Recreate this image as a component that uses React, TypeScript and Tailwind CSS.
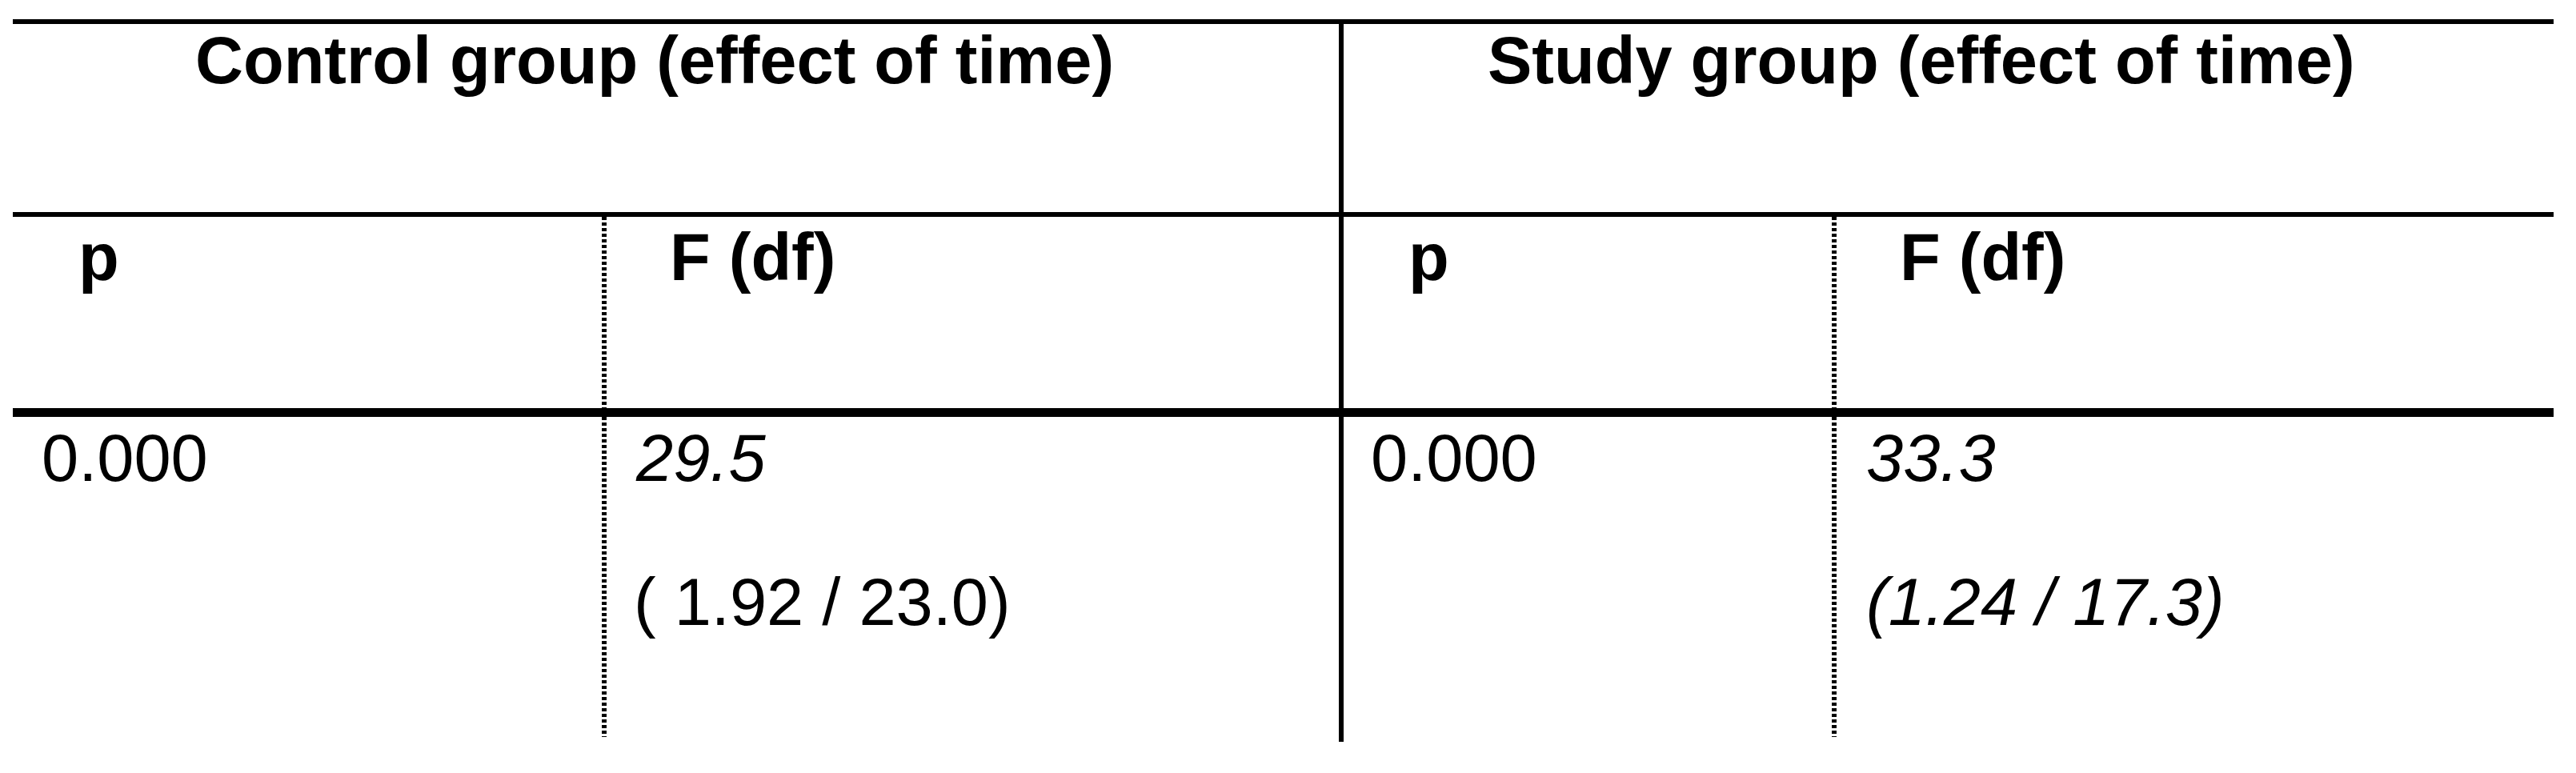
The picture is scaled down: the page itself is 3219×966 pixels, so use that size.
import React from "react";

const Dashed = ({ className = "" }: { className?: string }) => (
  <div
    className={`w-[6px] shrink-0 bg-[repeating-linear-gradient(to_bottom,#000_0px,#000_4px,transparent_4px,transparent_7px)] ${className}`}
  />
);

const Solid = () => <div className="w-[6px] shrink-0 bg-black" />;

export default function App() {
  return (
    <div
      className="w-[3219px] h-[966px] bg-white pt-[24px] pl-[16px] text-black text-[83px] leading-none"
      style={{ fontFamily: '"Liberation Sans", Arial, sans-serif' }}
    >
      <div className="w-[3175px] border-t-[6px] border-black">
        {/* Row 1: group headings */}
        <div className="flex h-[235px]">
          <div className="w-[1657px] shrink-0 pl-[228px] pt-[4px] font-bold whitespace-nowrap">
            Control group (effect of time)
          </div>
          <Solid />
          <div className="flex-1 pl-[180px] pt-[4px] font-bold whitespace-nowrap">
            Study group (effect of time)
          </div>
        </div>
        <div className="h-[6px] bg-black" />

        {/* Row 2: sub headings */}
        <div className="flex h-[239px]">
          <div className="w-[736px] shrink-0 pl-[82px] pt-[9px] font-bold">p</div>
          <Dashed />
          <div className="w-[915px] shrink-0 pl-[79px] pt-[9px] font-bold whitespace-nowrap">
            F (df)
          </div>
          <Solid />
          <div className="w-[610px] shrink-0 pl-[81px] pt-[9px] font-bold">p</div>
          <Dashed />
          <div className="flex-1 pl-[79px] pt-[9px] font-bold whitespace-nowrap">F (df)</div>
        </div>
        <div className="h-[11px] bg-black" />

        {/* Row 3: values */}
        <div className="flex h-[406px]">
          <div className="w-[736px] shrink-0 pl-[36px] pt-[10px]">0.000</div>
          <Dashed className="mb-[6px]" />
          <div className="w-[915px] shrink-0 pl-[37px] pt-[10px] whitespace-nowrap">
            <div className="italic">29.5</div>
            <div className="mt-[97px] -ml-[3px]">( 1.92 / 23.0)</div>
          </div>
          <Solid />
          <div className="w-[610px] shrink-0 pl-[34px] pt-[10px]">0.000</div>
          <Dashed className="mb-[6px]" />
          <div className="flex-1 pl-[37px] pt-[10px] whitespace-nowrap italic">
            <div>33.3</div>
            <div className="mt-[97px]">(1.24 / 17.3)</div>
          </div>
        </div>
      </div>
    </div>
  );
}
